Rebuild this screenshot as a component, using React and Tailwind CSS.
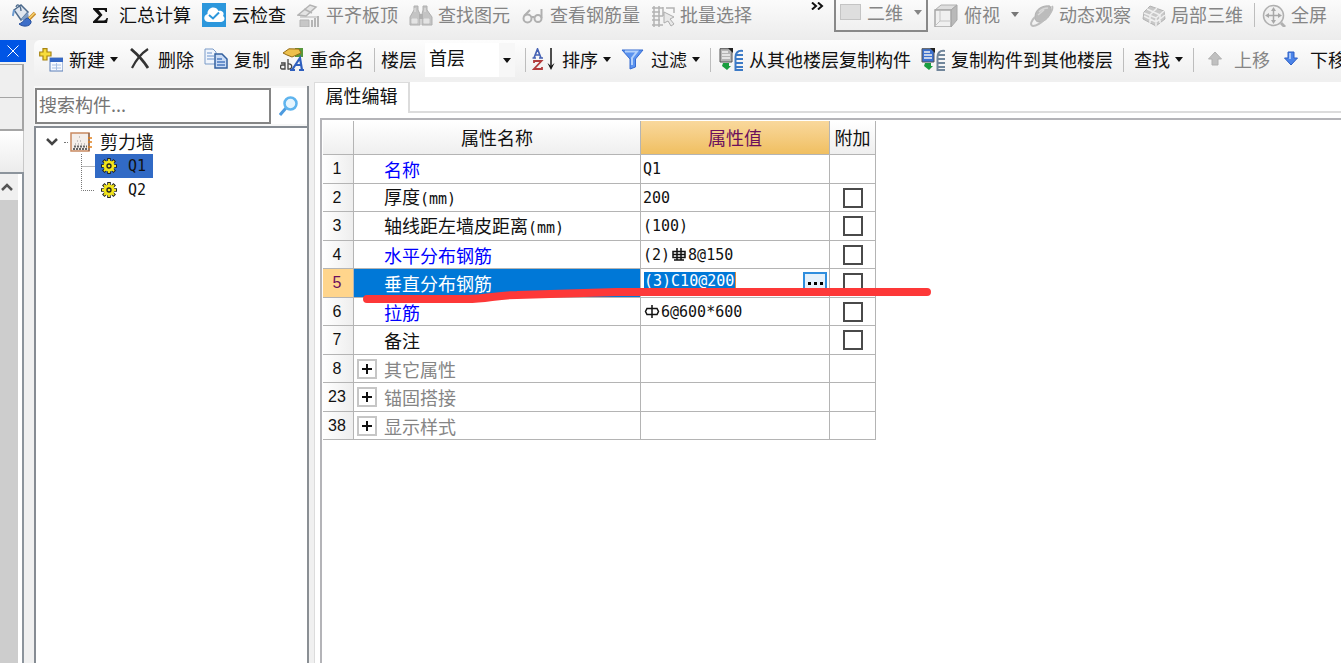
import React, { useState } from "react";

const MONO = "font-['DejaVu_Sans_Mono','Noto_Sans_CJK_SC',monospace] text-[15px]";

const ROWS = [
  { no: 1, name: "名称", value: "Q1", tone: "link", noCheck: true },
  { no: 2, name: "厚度", unit: "(mm)", value: "200" },
  { no: 3, name: "轴线距左墙皮距离", unit: "(mm)", value: "(100)" },
  { no: 4, name: "水平分布钢筋", value: "(2)", rebar: "C", spec: "8@150", tone: "link" },
  { no: 5, name: "垂直分布钢筋", value: "(3)C10@200", editing: true },
  { no: 6, name: "拉筋", rebar: "A", spec: "6@600*600", tone: "link" },
  { no: 7, name: "备注" },
  { no: 8, name: "其它属性", group: true },
  { no: 23, name: "锚固搭接", group: true },
  { no: 38, name: "显示样式", group: true },
];

/* ---------- icons ---------- */

function Svg({ children }) {
  return (
    <svg viewBox="0 0 24 24" className="h-6 w-6 shrink-0" fill="none" aria-hidden="true">
      {children}
    </svg>
  );
}

const PaintIcon = () => (
  <Svg>
    <path d="M2 7 L9 2 L16 9 L9 17 Z" fill="#dfe6ef" stroke="#4d6a8c" strokeWidth="1.5" />
    <path d="M4 4 C5 0 9 2 9 8" stroke="#4d6a8c" strokeWidth="1.3" />
    <path d="M2 7 L0.8 13" stroke="#6d9bd0" strokeWidth="2" />
    <path d="M9 16 L16 9 L17 15 L12 18 Z" fill="#7d9cc4" />
    <path d="M23 10 L15 18" stroke="#c98b2c" strokeWidth="3.5" />
    <path d="M22.5 10 L16 16.5" stroke="#f7d46e" strokeWidth="1.5" />
    <path d="M16 15 C13 15 12 19 7 21 C12 25 20 23 19 18 Z" fill="#3e6fc9" stroke="#28509d" />
  </Svg>
);

const SigmaIcon = () => (
  <Svg>
    <path d="M4 5 H18 V9 H16.5 C16.5 7.5 15.5 7 14 7 H9.5 L13.500 12 L8.500 17.500 H14.500 C16.500 17.500 17 16.500 17.500 15 H19 L18 20 H4 V18.500 L10 12.500 L4 6.300 Z" fill="#111" />
  </Svg>
);

const CloudCheckIcon = () => (
  <Svg>
    <rect width="24" height="24" fill="#2c97dc" />
    <path d="M7 19 C1 19 1 12 5.500 11 C5 4 14 2 16.500 8 C20 7 23 10 21 13 C24 15 22 19 19 19 Z" fill="#fff" />
    <path d="M7 12 L11 15.500 L17 9.500" stroke="#2c97dc" strokeWidth="2" />
  </Svg>
);

const AlignSlabIcon = () => (
  <Svg>
    <path d="M1 12 L13 2 L19 4 L9 13 Z M7 6 L15 10" fill="#e4e4e4" stroke="#b3b3b3" strokeWidth="1.5" />
    <path d="M3 14 H21 M3 17 H12 V24 H3 Z" fill="#c7c7c7" stroke="#b3b3b3" />
    <path d="M15 24 V17 M18 24 V15 M21 24 V13" stroke="#b5b5b5" strokeWidth="2" />
  </Svg>
);

const BinocularsIcon = () => (
  <Svg>
    <path d="M5 3 H9 V7 L11 11 V22 H1 V14 L5 7 Z M14 3 H18 V7 L23 14 V22 H13 V11 L14 7 Z" fill="#c4c4c4" stroke="#b0b0b0" />
    <path d="M10 11 H14 V16 H10 Z" fill="#b0b0b0" />
    <path d="M3 16 H8 V20 H3 Z M15 16 H20 V20 H15 Z M6 5 V9 M16 5 V9" fill="#e4e4e4" stroke="#e4e4e4" />
  </Svg>
);

const GlassesIcon = () => (
  <Svg>
    <circle cx="6.500" cy="15.500" r="4" stroke="#b0b0b0" strokeWidth="2" />
    <circle cx="17" cy="15.500" r="3.500" stroke="#b0b0b0" strokeWidth="2" />
    <path d="M3 13 L9 7 M20.500 15 V6 M10 14 H13" stroke="#b0b0b0" strokeWidth="2" />
  </Svg>
);

const BatchSelectIcon = () => (
  <Svg>
    <path d="M1 5 H12 M1 9 H9 M1 13 H12 M1 17 H9 M1 22 H12 M3 3 V24 M8 3 V24 M12 4 V13 M15 5 H23 V10" stroke="#b3b3b3" strokeWidth="1.5" />
    <path d="M13 9 L23 14 L19 16 L23 21 L20 23 L17 18 L13 20 Z" fill="#e8e8e8" stroke="#adadad" />
  </Svg>
);

const CubeIcon = () => (
  <Svg>
    <path d="M1 7 L7 2 H23 L17 7 Z" fill="#dedede" stroke="#b0b0b0" />
    <path d="M17 7 L23 2 V17 L17 24 Z" fill="#b9b9b9" stroke="#a8a8a8" />
    <path d="M1 7 H17 V24 H1 Z" fill="#f0f0f0" stroke="#a8a8a8" strokeWidth="1.500" />
    <path d="M6 8 V18 L1 23 M6 18 H17" stroke="#c4c4c4" />
  </Svg>
);

const OrbitIcon = () => (
  <Svg>
    <path d="M5 14 C5 5 14 2 20 3 C23 9 18 18 10 19 C6 19 5 17 5 14 Z" fill="#bcbcbc" stroke="#b0b0b0" />
    <path d="M22 3 C25 9 9 23 3 23 C-1 22 2 17 5 14" stroke="#bdbdbd" strokeWidth="2" />
    <path d="M9 9 C12 6 15 5 18 5 M8 12 L14 7" stroke="#d8d8d8" strokeWidth="1.500" />
  </Svg>
);

const Local3dIcon = () => (
  <Svg>
    <path d="M8 3 L22 8 L23 16 L14 23 L1 16 L2 9 Z" fill="#c8c8c8" stroke="#b3b3b3" />
    <path d="M2 10 L14 15 L22 8 M14 15 V23 M5 6 L18 12 V20 M15 5 L8 12 V20 M2 13 L14 19 L23 12" stroke="#efefef" strokeWidth="1.500" />
  </Svg>
);

const FullScreenIcon = () => (
  <Svg>
    <circle cx="11.500" cy="12.500" r="10" fill="#f0f0f0" stroke="#b0b0b0" strokeWidth="1.500" />
    <path d="M19 20 L23 24" stroke="#b0b0b0" strokeWidth="3" />
    <path d="M11.500 7 V18 M6 12.500 H17" stroke="#a8a8a8" strokeWidth="1.500" />
    <path d="M11.500 4 L14 8 H9 Z M11.500 21 L9 17 H14 Z M3 12.500 L7 10 V15 Z M20 12.500 L16 10 V15 Z" fill="#a8a8a8" />
  </Svg>
);

const NewIcon = () => (
  <Svg>
    <path d="M4 0.700 H8 V4 H12 V8 H8 V12 H4 V8 H0.700 V4 H4 Z" fill="#f8dc3c" stroke="#a88412" strokeWidth="1.200" />
    <rect x="11" y="10" width="13" height="13" fill="#f7faff" stroke="#5b7fb8" />
    <path d="M11 10 H24 V14 H11 Z" fill="#3567c5" />
    <path d="M13 17 H22 M13 20 H22 M17.500 15 V22" stroke="#a8bfe2" />
  </Svg>
);

const DeleteIcon = () => (
  <Svg>
    <path d="M3 1 C10 7 15 12 20 20" stroke="#333" strokeWidth="2.800" />
    <path d="M20 1 C14 5 8 12 4 20" stroke="#333" strokeWidth="2.200" />
  </Svg>
);

const CopyIcon = () => (
  <Svg>
    <path d="M1 1 H9 L12 4 V16 H1 Z" fill="#f0f5fc" stroke="#7b9bc8" />
    <path d="M3 5 H8 M3 8 H10 M3 11 H10" stroke="#6b92cc" />
    <path d="M11 6 H18 L23 11 V20 H11 Z" fill="#c9dbf5" stroke="#33609f" strokeWidth="1.500" />
    <path d="M13 11 H18 M13 14 H21 M13 17 H21" stroke="#4a7ac0" strokeWidth="1.500" />
  </Svg>
);

const RenameIcon = () => (
  <Svg>
    <path d="M15 0 H23 V9 H15 Z" fill="#58983c" />
    <path d="M3 5 L9 0.800 L19 1 L21 5 L12 9 L7 7 Z" fill="#edc04c" stroke="#936b17" />
    <path d="M1 15 H5 V21 H2 C0 21 0 17 2 17 H5 M8 11 V21 C13 22 13 15 8 16" stroke="#444" strokeWidth="1.300" />
    <path d="M12 22 L20 10 L22 22 M15 17 H21 M10 22 H15 M19 22 H24" stroke="#2e5fbe" strokeWidth="2.200" />
  </Svg>
);

const SortIcon = () => (
  <Svg>
    <path d="M2 10 L5.500 1 L9 10 M3 7 H8 M0.500 10 H4 M7 10 H11" stroke="#4662b4" strokeWidth="1.700" />
    <path d="M2 15 V13 H9.500 L2 21 H10 V19" stroke="#b23c3c" strokeWidth="1.800" />
    <path d="M19 0 V20" stroke="#151515" strokeWidth="1.500" />
    <path d="M15.500 15 L19 18 L22.500 15 L19 22 Z" fill="#151515" />
  </Svg>
);

const FilterIcon = () => (
  <Svg>
    <path d="M1 2 H22 L14.500 11 V19 L9 21 V11 Z" fill="#5b93ef" stroke="#356bd0" />
    <path d="M4 3.500 H16 L11 10 V17" stroke="#b4d2fb" strokeWidth="2" />
  </Svg>
);

function FloorCopyIcon({ paper, rebar }) {
  return (
    <Svg>
      <path d="M1 0.700 H10 L13 3 V14 H1 Z" fill={paper} stroke="#555" />
      <path d="M3 4 H9 M3 7 H11 M3 10 H11" stroke="#f4f4f4" strokeWidth="1.500" />
      <path d="M9 0 H14 V5 Z" fill="#222" />
      <path d="M4 15 H10 V18 H12 L8 22 L3 18 Z" fill="#1a9d3f" />
      <path d="M24 3 C18 2 16.500 6 16.500 9 V23" stroke={rebar} strokeWidth="2" />
      <path d="M17 7 H24 M17 11 H24 M17 15 H24 M17 19 H24 M17 22 H24" stroke={rebar} strokeWidth="2" />
    </Svg>
  );
}

const CopyFromIcon = () => <FloorCopyIcon paper="#b5b5b5" rebar="#3c7ac6" />;
const CopyToIcon = () => <FloorCopyIcon paper="#3c71cf" rebar="#71869b" />;

const UpIcon = () => (
  <Svg>
    <path d="M11 4 L17.500 11 H14 V17 H8 V11 H4.500 Z" fill="#c0c0c0" stroke="#b0b0b0" />
  </Svg>
);

const DownIcon = () => (
  <Svg>
    <path d="M8 4 H14 V10 H17.500 L11 17 L4.500 10 H8 Z" fill="#4b83e8" stroke="#2c5fc4" />
    <path d="M10 5 V11" stroke="#a3c4fa" strokeWidth="2" />
  </Svg>
);

function WallIcon() {
  return (
    <svg viewBox="0 0 22 20" className="h-5 w-[22px]" fill="none" aria-hidden="true">
      <rect x="1" y="1" width="18" height="18" fill="#f4eeea" stroke="#c98a62" strokeWidth="1.500" />
      <path d="M3 17 H18 M4 14.500 H17" stroke="#666" strokeWidth="2" strokeDasharray="2 1" />
      <path d="M5 12 H15 M7 9 H13 M9 5 H10" stroke="#999" strokeDasharray="1 2" />
      <path d="M19 1 V19" stroke="#6d5546" />
      <path d="M18 6 H22 M18 10 H22 M18 15 H22" stroke="#e0801e" strokeWidth="1.500" />
    </svg>
  );
}

function GearIcon() {
  return (
    <svg viewBox="0 0 16 16" className="h-4 w-4" fill="none" aria-hidden="true">
      <path d="M8 0 V16 M0 8 H16 M2.300 2.300 L13.700 13.700 M13.700 2.300 L2.300 13.700" stroke="#222" strokeWidth="3.600" />
      <circle cx="8" cy="8" r="5.500" fill="#f2e51c" />
      <path d="M8 1 V15 M1 8 H15 M3 3 L13 13 M13 3 L3 13" stroke="#f2e51c" strokeWidth="1.800" />
      <circle cx="8" cy="8" r="2" fill="#f2e51c" stroke="#222" strokeWidth="1.300" />
    </svg>
  );
}

function Branch({ last }) {
  return (
    <svg viewBox="0 0 14 24" className="h-6 w-[14px] shrink-0" aria-hidden="true">
      <path
        d={last ? "M0.500 0 V12.500 H14" : "M0.500 0 V24 M0.500 12.500 H14"}
        fill="none"
        stroke="#777"
        strokeDasharray="1 1"
      />
    </svg>
  );
}

// steel grade marks: A = plain bar, C = ribbed bar
function RebarMark({ grade }) {
  return (
    <svg viewBox="0 0 18 18" className="h-[18px] w-[18px]" fill="none" stroke="#111" strokeWidth="1.500" aria-hidden="true">
      {grade === "A" ? (
        <path d="M4 5.500 H14 L15.500 8.500 L14 11.500 H4 L2.500 8.500 Z M9 2 V15" />
      ) : (
        <path d="M3 5.500 H15 V11.500 H3 Z M7 2 V14 M11 2 V14 M4 14 H14 M3 8.500 H15" />
      )}
    </svg>
  );
}

function Caret() {
  return (
    <svg viewBox="0 0 8 5" className="h-[5px] w-2 shrink-0" aria-hidden="true">
      <path d="M0 0 H8 L4 5 Z" fill="currentColor" />
    </svg>
  );
}

/* ---------- toolbar ---------- */

function Tool({ icon: Icon, label, menu, disabled, tight }) {
  return (
    <button
      type="button"
      disabled={disabled}
      className={`flex shrink-0 items-center whitespace-nowrap ${tight ? "gap-[5px]" : "gap-1.5"} ${
        disabled ? "text-[#858585]" : "text-[#111]"
      }`}
    >
      {Icon && <Icon />}
      <span className="flex items-center gap-[5px] pb-0.5">
        {label}
        {menu && <Caret />}
      </span>
    </button>
  );
}

const Divider = () => <div className="h-6 w-px shrink-0 bg-[#bdbdbd]" />;

function MainToolbar() {
  return (
    <div className="flex h-10 shrink-0 items-start overflow-hidden bg-linear-to-b from-[#fbfbfb] to-[#ececec] pl-3">
      <div className="flex h-[29px] items-center gap-[11px]">
        <Tool icon={PaintIcon} label="绘图" />
        <Tool icon={SigmaIcon} label="汇总计算" />
        <Tool icon={CloudCheckIcon} label="云检查" />
        <Tool icon={AlignSlabIcon} label="平齐板顶" disabled tight />
        <Tool icon={BinocularsIcon} label="查找图元" disabled tight />
        <Tool icon={GlassesIcon} label="查看钢筋量" disabled tight />
        <Tool icon={BatchSelectIcon} label="批量选择" disabled tight />
      </div>
      <button type="button" aria-label="更多" className="ml-[58px] mr-2 mt-0.5 w-4 shrink-0">
        <svg viewBox="0 0 16 8" className="h-2 w-4" fill="none" stroke="#111" strokeWidth="2" aria-hidden="true">
          <path d="M2 0.500 L6 4 L2 7.500 M8 0.500 L12 4 L8 7.500" />
        </svg>
      </button>
      <button
        type="button"
        disabled
        className="mr-1.5 flex h-8 w-[94px] shrink-0 items-center justify-between border-2 border-t-0 border-[#888] pb-1.5 pl-1 pr-1 text-[#858585]"
      >
        <span className="flex items-center gap-1.5">
          <span className="h-4 w-[21px] border border-[#c4c4c4] bg-[#dedede]" />
          二维
        </span>
        <Caret />
      </button>
      <div className="flex h-[29px] items-center gap-[11px]">
        <Tool icon={CubeIcon} label="俯视" disabled />
        <span className="text-[#777]">
          <Caret />
        </span>
        <Tool icon={OrbitIcon} label="动态观察" disabled tight />
        <Tool icon={Local3dIcon} label="局部三维" disabled tight />
        <Divider />
        <div className="-ml-1">
          <Tool icon={FullScreenIcon} label="全屏" disabled tight />
        </div>
      </div>
    </div>
  );
}

function ComponentToolbar() {
  return (
    <div className="flex h-10 shrink-0 items-center gap-2.5 overflow-hidden rounded-tl-md bg-linear-to-b from-[#fdfdfd] to-[#efefef] pl-[5px]">
      <Tool icon={NewIcon} label="新建" menu />
      <Tool icon={DeleteIcon} label="删除" />
      <Tool icon={CopyIcon} label="复制" />
      <Tool icon={RenameIcon} label="重命名" />
      <Divider />
      <div className="-ml-1 flex shrink-0 items-center gap-2">
        <label htmlFor="floor" className="pb-0.5">
          楼层
        </label>
        <div className="relative">
          <select id="floor" className="block h-[34px] w-[90px] appearance-none bg-white pb-1.5 pl-1">
            <option>首层</option>
          </select>
          <span className="pointer-events-none absolute inset-y-0 right-0 flex w-4 items-center justify-center bg-[#f7f7f7]">
            <Caret />
          </span>
        </div>
      </div>
      <div className="flex shrink-0 items-center gap-1.5">
        <Divider />
        <Tool icon={SortIcon} label="排序" menu />
      </div>
      <Tool icon={FilterIcon} label="过滤" menu />
      <div className="flex shrink-0 items-center gap-2">
        <Divider />
        <Tool icon={CopyFromIcon} label="从其他楼层复制构件" />
      </div>
      <Tool icon={CopyToIcon} label="复制构件到其他楼层" />
      <Divider />
      <Tool label="查找" menu />
      <Divider />
      <Tool icon={UpIcon} label="上移" disabled />
      <Tool icon={DownIcon} label="下移" />
    </div>
  );
}

/* ---------- panels ---------- */

function SideStrip() {
  return (
    <div className="flex w-[34px] shrink-0 flex-col">
      <button type="button" aria-label="关闭" className="flex h-[22px] w-[26px] items-center justify-center bg-[#0055e5]">
        <svg viewBox="0 0 12 12" className="h-3 w-3" stroke="#fff" aria-hidden="true">
          <path d="M0.500 0.500 L11.500 11.500 M11.500 0.500 L0.500 11.500" />
        </svg>
      </button>
      <div className="mt-0.5 h-[34px] w-6 border-y border-r-2 border-[#a5a5a5] bg-[#efefef]" />
      <div className="h-[33px] w-6 border-b-2 border-r-2 border-[#a5a5a5] bg-[#efefef]" />
      <div className="h-[41px] w-6 border-r border-[#c8c8c8] bg-linear-to-b from-white to-[#ececec]" />
      <div className="flex w-6 flex-1 flex-col border-r-2 border-t-2 border-[#8c949c] bg-white pr-1">
        <button type="button" aria-label="向上滚动" className="flex h-[26px] items-center justify-center bg-[#f0f0f0] pr-1">
          <svg viewBox="0 0 12 8" className="h-2 w-3" fill="none" stroke="#555" strokeWidth="2.500" aria-hidden="true">
            <path d="M1 7 L6 2 L11 7" />
          </svg>
        </button>
        <div className="flex-1 bg-[#cdcdcd]" />
      </div>
    </div>
  );
}

function ComponentTree() {
  const [selected, setSelected] = useState("Q1");

  return (
    <div className="mt-1.5 flex w-[275px] shrink-0 flex-col border-r-2 border-[#8a8f94]">
      <div className="flex h-10 items-center bg-[#f7f7f7] pl-px">
        <input
          type="text"
          aria-label="搜索构件"
          placeholder="搜索构件..."
          className="h-9 min-w-0 flex-1 border-2 border-[#858585] bg-white pb-1 pl-0.5 text-[#333] outline-none placeholder:text-[#757575]"
        />
        <button type="button" aria-label="搜索" className="flex h-9 w-9 items-center justify-center bg-white">
          <svg viewBox="0 0 20 20" className="h-5 w-5" fill="none" aria-hidden="true">
            <path d="M1 19 L7 12" stroke="#4d9bdf" strokeWidth="3" />
            <circle cx="11.500" cy="7.500" r="6" fill="#e6f5fe" stroke="#5fb4ee" strokeWidth="2.500" />
          </svg>
        </button>
      </div>
      <div className="flex-1 border-l-2 border-t-2 border-[#868c93] bg-white pt-0.5">
        <div className="flex h-6 items-center pl-2.5">
          <svg viewBox="0 0 12 8" className="h-2 w-3" fill="none" stroke="#444" strokeWidth="2.500" aria-hidden="true">
            <path d="M1 1 L6 6 L11 1" />
          </svg>
          <span className="ml-1.5 mr-0.5 w-1 border-t border-dotted border-[#777]" />
          <WallIcon />
          <span className="ml-2 pb-0.5">剪力墙</span>
        </div>
        {["Q1", "Q2"].map((name, i) => (
          <div key={name} className="flex h-6 items-center pl-[45px]">
            <Branch last={i === 1} />
            <button
              type="button"
              onClick={() => setSelected(name)}
              className={`flex h-6 w-[58px] items-center gap-[11px] pl-1.5 ${MONO} ${
                selected === name ? "bg-[#316ac5]" : ""
              }`}
            >
              <GearIcon />
              {name}
            </button>
          </div>
        ))}
      </div>
    </div>
  );
}

function ValueCell({ row }) {
  const [text, setText] = useState(row.value || "");

  if (row.editing) {
    return (
      <div className="flex items-start justify-between pl-[3px] pr-0.5">
        <input
          type="text"
          aria-label={row.name}
          value={text}
          onChange={(e) => setText(e.target.value)}
          className="h-[18px] w-[92px] border-r border-[#e08a3c] bg-[#0078d7] text-white outline-none"
        />
        <button
          type="button"
          aria-label="更多选项"
          className="flex h-[22px] w-6 items-center justify-center gap-[3px] border-2 border-[#2f8ede] bg-[#e5f1fb]"
        >
          <span className="h-[3px] w-[3px] bg-black" />
          <span className="h-[3px] w-[3px] bg-black" />
          <span className="h-[3px] w-[3px] bg-black" />
        </button>
      </div>
    );
  }
  return (
    <div className="flex items-center pl-0.5">
      {row.value}
      {row.rebar && <RebarMark grade={row.rebar} />}
      {row.spec}
    </div>
  );
}

function nameColor(row) {
  if (row.editing) return "bg-[#0078d7] text-white";
  if (row.tone === "link") return "text-[#0000ff]";
  if (row.group) return "text-[#858585]";
  return "";
}

function PropertyTable() {
  return (
    <table className="w-[553px] table-fixed border-separate border-spacing-0 [&_td]:border-b [&_td]:border-r [&_td]:border-[#b4b4b4] [&_th]:border-b [&_th]:border-r [&_th]:border-[#b4b4b4] [&_th]:font-normal">
      <colgroup>
        <col className="w-[31px]" />
        <col className="w-[287px]" />
        <col className="w-[189px]" />
        <col className="w-[46px]" />
      </colgroup>
      <thead>
        <tr className="h-[34px] bg-linear-to-b from-white to-[#eeeeee] [&>th]:pb-0.5">
          <th />
          <th>属性名称</th>
          <th className="bg-linear-to-b from-[#f9d89c] to-[#f0bf60] text-[#6b0f5c]">属性值</th>
          <th>附加</th>
        </tr>
      </thead>
      <tbody>
        {ROWS.map((row) => (
          <tr key={row.no} className="odd:h-[29px] even:h-7">
            <th
              scope="row"
              className={`pr-0.5 font-['Liberation_Sans',sans-serif] text-base leading-5 ${
                row.editing ? "bg-[#ffd58c] text-[#6b0f5c]" : "bg-linear-to-r from-white to-[#eeeeee]"
              }`}
            >
              {row.no}
            </th>
            <td className={nameColor(row)}>
              <div className="flex h-6 items-center">
                <span className="flex w-[30px] shrink-0 pl-[3px]">
                  {row.group && (
                    <button
                      type="button"
                      aria-label={`展开${row.name}`}
                      className="flex h-5 w-5 items-center justify-center border-2 border-[#c6c6c6] bg-white"
                    >
                      <svg viewBox="0 0 10 10" className="h-2.5 w-2.5" stroke="#111" strokeWidth="2" aria-hidden="true">
                        <path d="M5 0 V10 M0 5 H10" />
                      </svg>
                    </button>
                  )}
                </span>
                <span>
                  {row.name}
                  {row.unit && <span className={MONO}>{row.unit}</span>}
                </span>
              </div>
            </td>
            <td className={`${MONO} leading-5`}>
              <ValueCell row={row} />
            </td>
            <td>
              {!row.noCheck && !row.group && (
                <input
                  type="checkbox"
                  aria-label={`附加${row.name}`}
                  className="mx-auto block h-5 w-5 appearance-none border-2 border-[#4a4a4a] bg-white checked:bg-[#4a4a4a]"
                />
              )}
            </td>
          </tr>
        ))}
      </tbody>
    </table>
  );
}

function PropertyPanel() {
  return (
    <div className="ml-[5px] mt-0.5 flex min-w-0 flex-1 flex-col border-l border-[#dcdcdc] bg-white">
      <div className="flex h-[31px] shrink-0" role="tablist">
        <button
          type="button"
          role="tab"
          aria-selected="true"
          className="w-[95px] border-r-2 border-t border-[#dcdcdc] pb-1.5"
        >
          属性编辑
        </button>
        <div className="flex-1 border-b-2 border-[#dcdcdc]" />
      </div>
      <div className="relative ml-[5px] mt-[5px] flex-1 border-l-2 border-t-2 border-[#b4b4b8] pl-px pt-px">
        <PropertyTable />
        {/* hand-drawn marker under the edited row */}
        <svg
          viewBox="0 0 572 20"
          className="pointer-events-none absolute left-[41px] top-[165px] h-5 w-[572px]"
          fill="none"
          aria-hidden="true"
        >
          <path
            d="M4 14 H104 C124 14 134 10 154 10 L254 7 H564"
            stroke="#fd3838"
            strokeWidth="8"
            strokeLinecap="round"
            strokeLinejoin="round"
          />
        </svg>
      </div>
    </div>
  );
}

export default function App() {
  return (
    <div className="flex h-screen flex-col overflow-hidden bg-[#f0f0f0] font-['Noto_Sans_CJK_SC',sans-serif] text-lg leading-6 text-[#111]">
      <MainToolbar />
      <div className="flex min-h-0 flex-1">
        <SideStrip />
        <div className="flex min-w-0 flex-1 flex-col">
          <ComponentToolbar />
          <div className="flex min-h-0 flex-1">
            <ComponentTree />
            <PropertyPanel />
          </div>
        </div>
      </div>
    </div>
  );
}
